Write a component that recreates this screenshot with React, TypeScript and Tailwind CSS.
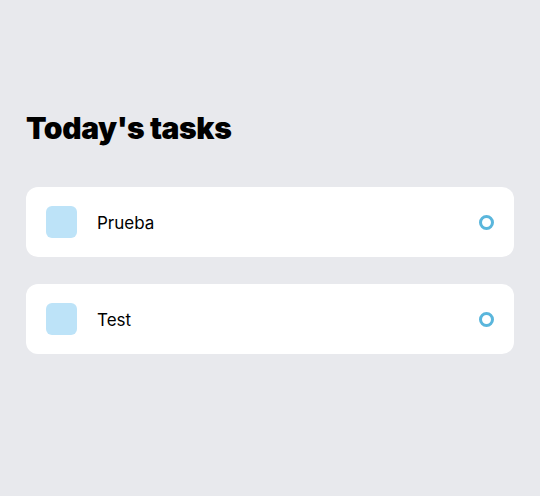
import React from "react";

const tasks = ["Prueba", "Test"];

export default function App() {
  return (
    <div
      className="w-[540px] h-[496px] bg-[#e8e9ed] px-[26px] pt-[108px]"
      style={{ fontFamily: "Inter, 'Noto Sans', sans-serif" }}
    >
      <h1 className="text-[30px] leading-[40px] font-black text-black tracking-[-0.4px]">
        Today's tasks
      </h1>
      <div className="mt-[39px] flex flex-col gap-[27px]">
        {tasks.map((t) => (
          <div
            key={t}
            className="h-[70px] bg-white rounded-[12px] flex items-center pl-[20px] pr-[20px]"
          >
            <div className="w-[31px] h-[32px] rounded-[6px] bg-[#bde3f8]" />
            <span className="ml-[20px] pt-[3px] text-[17px] text-black flex-1">{t}</span>
            <div className="w-[15px] h-[15px] rounded-full border-[3px] border-[#5ab6dc]" />
          </div>
        ))}
      </div>
    </div>
  );
}
